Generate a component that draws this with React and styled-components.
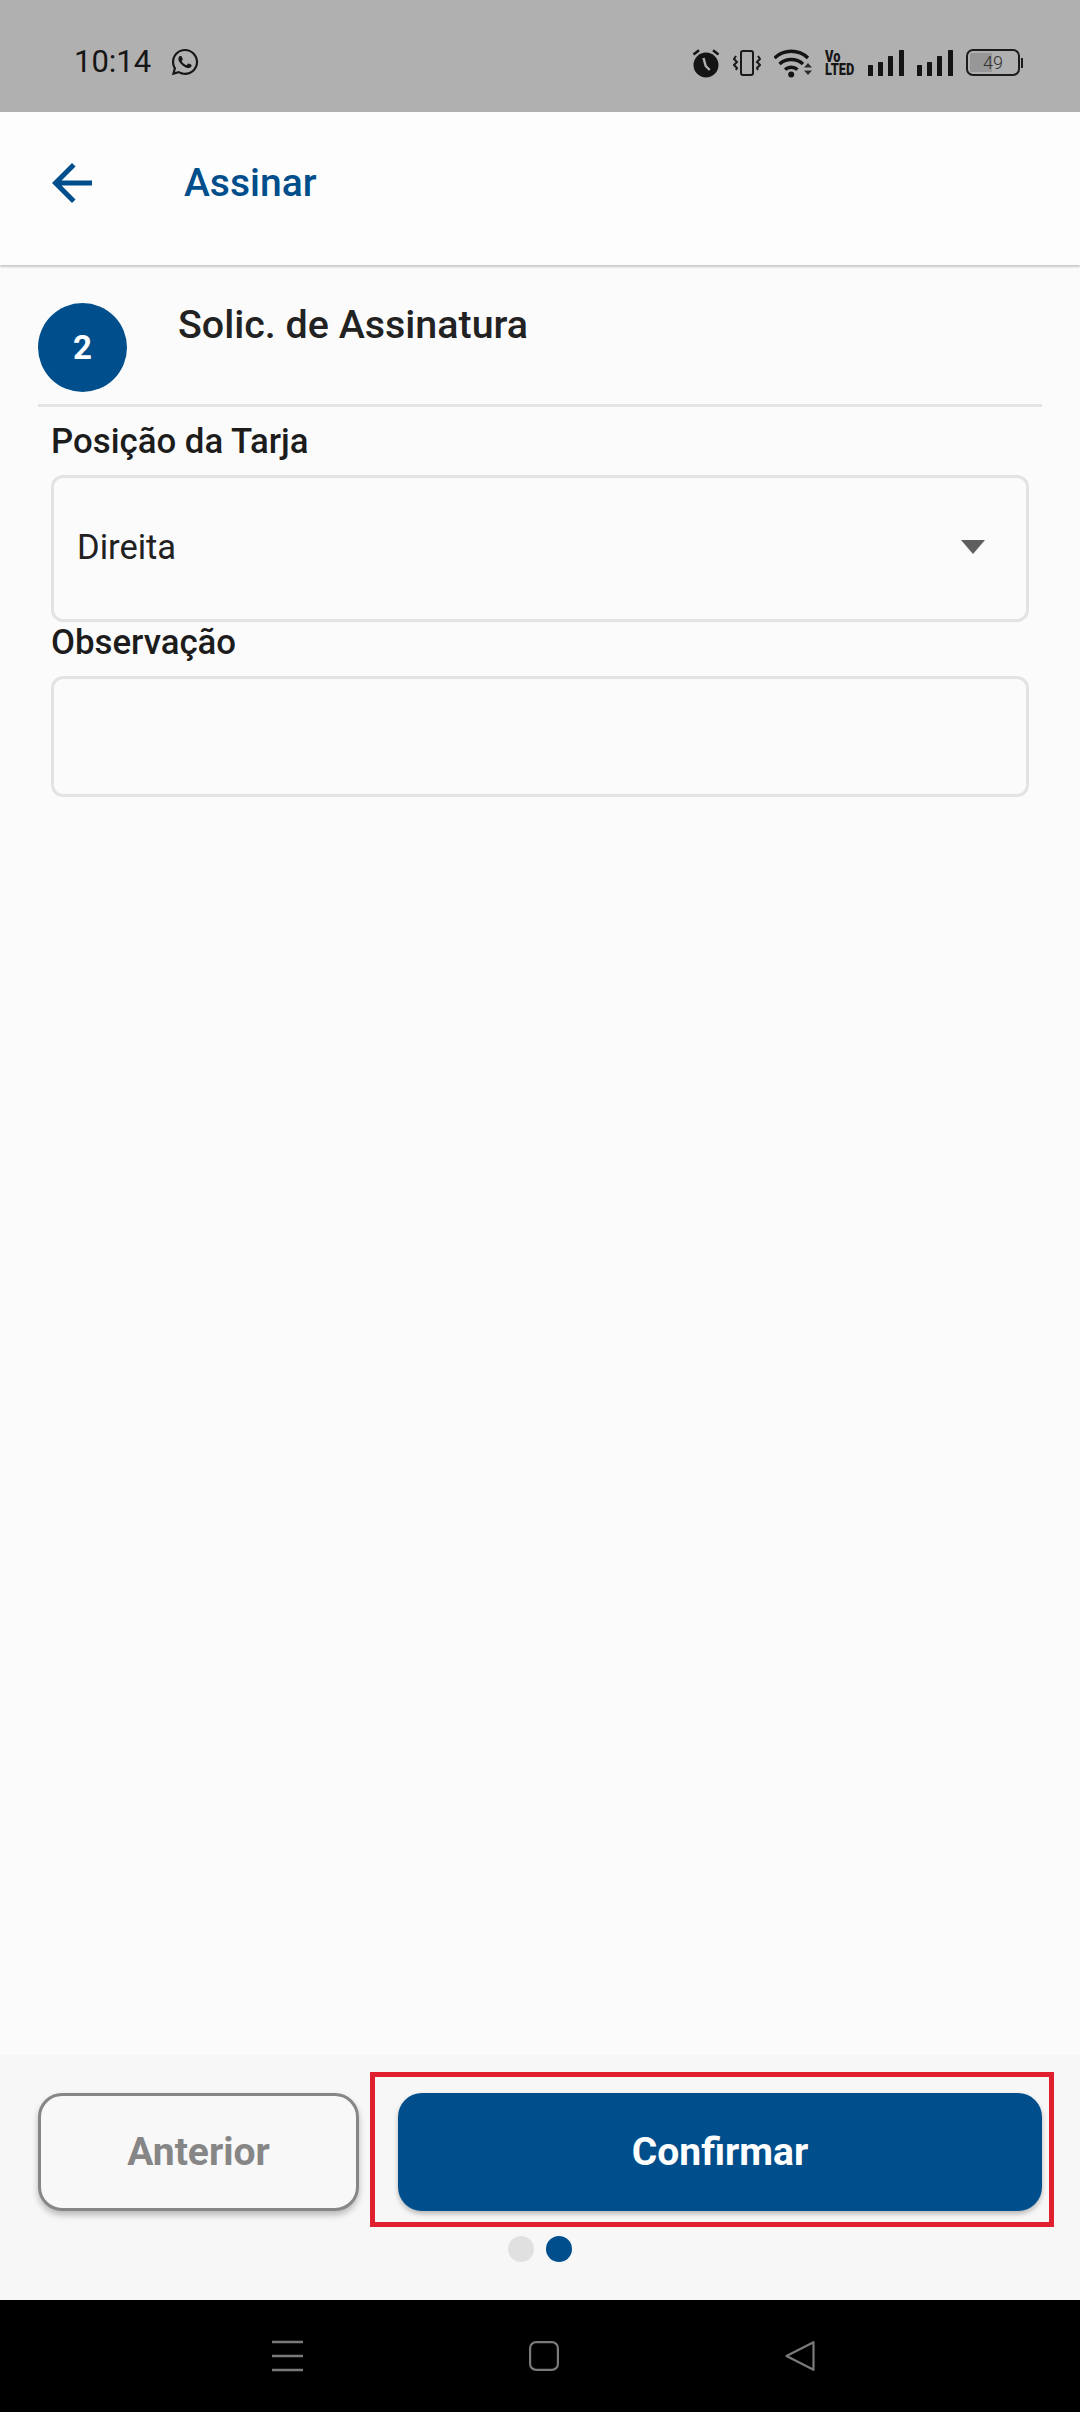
import React from "react";
import styled, { createGlobalStyle } from "styled-components";
import { FaWhatsapp } from "react-icons/fa";
import { MdArrowBack } from "react-icons/md";

const blue = "#004e8b";

const GlobalStyle = createGlobalStyle`
  html, body { margin: 0; padding: 0; background: #fbfbfb; }
  * { box-sizing: border-box; }
  body { font-family: Roboto, "Noto Sans", sans-serif; }
`;

const Screen = styled.div`
  width: 1080px;
  height: 2412px;
  display: flex;
  flex-direction: column;
  overflow: hidden;
  background: #fbfbfb;
`;

// status bar
const StatusBar = styled.div`
  height: 112px;
  flex: none;
  background: #b0b0b0;
  display: flex;
  align-items: center;
  justify-content: space-between;
  padding: 0 57px 0 74px;
  color: #161616;
`;

const StatusLeft = styled.div`
  display: flex;
  align-items: center;
  gap: 19px;
  padding-top: 12px;
`;

const Time = styled.span`
  font-size: 31px;
  line-height: 36px;
`;

const StatusRight = styled.div`
  display: flex;
  align-items: center;
  gap: 13px;
  padding-top: 13px;
`;

const Volte = styled.div`
  width: 30px;
  display: flex;
  flex-direction: column;
  font-size: 16px;
  font-weight: 900;
  line-height: 13px;
  white-space: nowrap;
  color: #161616;
  transform: scaleX(0.8);
  transform-origin: left center;
`;

const Battery = styled.div`
  display: flex;
  align-items: center;
  gap: 1px;
`;

const BatteryBody = styled.div`
  width: 54px;
  height: 27px;
  border: 2px solid #1c1c1c;
  border-radius: 7px;
  display: flex;
  align-items: center;
  justify-content: center;
  font-size: 18px;
  font-weight: 300;
  color: #333;
  background: linear-gradient(#979797, #979797) no-repeat 2px 2px / ${(p) => p.$level}% calc(100% - 4px);
`;

const BatteryNub = styled.div`
  width: 2px;
  height: 10px;
  background: #1c1c1c;
`;

// app bar
const AppBar = styled.header`
  height: 153px;
  flex: none;
  background: #fdfdfd;
  box-shadow: 0 2px 2px rgba(0, 0, 0, 0.2);
  display: flex;
  align-items: center;
  gap: 82px;
  padding: 0 0 12px 42px;
  color: ${blue};
  position: relative;
`;

const AppTitle = styled.h1`
  margin: 0;
  font-size: 39px;
  font-weight: 500;
`;

// content
const Content = styled.main`
  flex: 1;
  display: flex;
  flex-direction: column;
`;

const StepHeader = styled.div`
  margin: 0 38px;
  padding-top: 38px;
  height: 142px;
  display: flex;
  align-items: flex-start;
  gap: 51px;
  border-bottom: 3px solid #e4e4e4;
`;

const StepBadge = styled.div`
  width: 89px;
  height: 89px;
  border-radius: 50%;
  background: ${blue};
  color: #fff;
  font-size: 33px;
  font-weight: 700;
  display: flex;
  align-items: center;
  justify-content: center;
`;

const StepTitle = styled.h2`
  margin: 0;
  font-size: 39.4px;
  line-height: 44px;
  font-weight: 500;
  color: #222;
`;

const Form = styled.div`
  padding: 14px 51px 0;
  display: flex;
  flex-direction: column;
`;

const Label = styled.label`
  display: block;
  font-size: 34.8px;
  line-height: 40px;
  font-weight: 500;
  color: #1c1c1c;
  margin-bottom: 14px;
`;

const Select = styled.div`
  height: 147px;
  border: 3px solid #e3e3e3;
  border-radius: 12px;
  display: flex;
  align-items: center;
  justify-content: space-between;
  padding: 0 41px 3px 23px;
  font-size: 34.5px;
  color: #212121;
`;

const Caret = styled.span`
  width: 0;
  height: 0;
  border-left: 12.5px solid transparent;
  border-right: 12.5px solid transparent;
  border-top: 14px solid #5f5f5f;
`;

const TextInput = styled.input`
  display: block;
  width: 100%;
  height: 121px;
  border: 3px solid #e3e3e3;
  border-radius: 12px;
  background: transparent;
  outline: none;
`;

// footer
const Footer = styled.footer`
  height: 245px;
  flex: none;
  background: #f7f7f7;
  padding: 38px 38px 0;
`;

const ButtonRow = styled.div`
  display: flex;
  gap: 39px;
`;

const OutlineButton = styled.button`
  width: 321px;
  height: 118px;
  border: 3px solid #868686;
  border-radius: 24px;
  background: #f8f8f8;
  color: #868686;
  font-family: inherit;
  font-size: 39px;
  font-weight: 700;
  box-shadow: 0 4px 6px rgba(0, 0, 0, 0.25);
`;

const PrimarySlot = styled.div`
  flex: 1;
  position: relative;
`;

const PrimaryButton = styled.button`
  width: 100%;
  height: 118px;
  border: 0;
  border-radius: 24px;
  background: ${blue};
  color: #fff;
  font-family: inherit;
  font-size: 39px;
  font-weight: 700;
  box-shadow: 0 3px 5px rgba(0, 0, 0, 0.25);
`;

const Highlight = styled.div`
  position: absolute;
  inset: -21px -12px -16px -28px;
  border: 5px solid #e0202e;
  pointer-events: none;
`;

const Dots = styled.div`
  display: flex;
  justify-content: center;
  gap: 12px;
  margin-top: 25px;
`;

const Dot = styled.span`
  width: 26px;
  height: 26px;
  border-radius: 50%;
  background: ${(p) => (p.$active ? blue : "#e0e0e0")};
`;

// android nav
const NavBar = styled.nav`
  height: 112px;
  flex: none;
  background: #000;
  display: flex;
  align-items: center;
  justify-content: center;
  gap: 226px;
  padding: 0 0 0 6px;
`;

const AlarmIcon = () => (
  <svg width="28" height="30" viewBox="0 0 28 30">
    <circle cx="14" cy="17" r="12.5" fill="#141414" />
    <path d="M1.5 6.5 7 2.2M21 2.2l5.5 4.3" stroke="#141414" strokeWidth="2.6" fill="none" />
    <path d="M11.5 10l2.2 8 4 4" stroke="#b0b0b0" strokeWidth="2.4" fill="none" />
  </svg>
);

const VibrateIcon = () => (
  <svg width="28" height="26" viewBox="0 0 28 26" fill="none" stroke="#1a1a1a" strokeWidth="2">
    <rect x="8" y="1" width="12" height="24" rx="2" />
    <path d="M3 6 1 9l3 3-3 3 3 3-1 2M25 6l2 3-3 3 3 3-3 3 1 2" />
  </svg>
);

const WifiIcon = () => (
  <svg width="38" height="30" viewBox="0 0 38 30">
    <g fill="none" stroke="#141414" strokeWidth="3.4">
      <path d="M0.500 10C10 1 24.500 1 34 10" />
      <path d="M5.500 16c6.500-6 17-6 23.500 0" />
      <path d="M11 21.500c3.500-3 9-3 12.500 0" />
    </g>
    <circle cx="17.200" cy="26.500" r="3" fill="#141414" />
    <path d="M30 19.500 34 15l4 4.500zM30 22.500H38L34 27z" fill="#2b2b2b" />
  </svg>
);

const SignalIcon = () => (
  <svg width="36" height="26" viewBox="0 0 36 26" fill="#141414">
    <rect x="0" y="15" width="5" height="11" rx="0.5" />
    <rect x="10" y="12" width="5" height="14" rx="0.5" />
    <rect x="20" y="6" width="5" height="20" rx="0.5" />
    <rect x="31" y="0" width="5" height="26" rx="0.5" />
  </svg>
);

const MenuIcon = () => (
  <svg width="31" height="32" viewBox="0 0 31 32" stroke="#7a7a7a" strokeWidth="2.4">
    <path d="M0 2h31M0 16h31M0 30h31" />
  </svg>
);

const HomeIcon = () => (
  <svg width="30" height="30" viewBox="0 0 30 30" fill="none" stroke="#7a7a7a" strokeWidth="2.2">
    <rect x="1.100" y="1.100" width="27.800" height="27.800" rx="6" />
  </svg>
);

const BackIcon = () => (
  <svg width="30" height="30" viewBox="0 0 30 30" fill="none" stroke="#7a7a7a" strokeWidth="2.2" strokeLinejoin="round">
    <path d="M1.500 15 28.500 1.200v27.600z" />
  </svg>
);

export default function App() {
  return (
    <Screen>
      <GlobalStyle />
      <StatusBar>
        <StatusLeft>
          <Time>10:14</Time>
          <FaWhatsapp size={30} />
        </StatusLeft>
        <StatusRight>
          <AlarmIcon />
          <VibrateIcon />
          <WifiIcon />
          <Volte>
            <span>Vo</span>
            <span>LTED</span>
          </Volte>
          <SignalIcon />
          <SignalIcon />
          <Battery>
            <BatteryBody $level={44}>49</BatteryBody>
            <BatteryNub />
          </Battery>
        </StatusRight>
      </StatusBar>

      <AppBar>
        <MdArrowBack size={60} />
        <AppTitle>Assinar</AppTitle>
      </AppBar>

      <Content>
        <StepHeader>
          <StepBadge>2</StepBadge>
          <StepTitle>Solic. de Assinatura</StepTitle>
        </StepHeader>
        <Form>
          <Label>Posição da Tarja</Label>
          <Select>
            Direita
            <Caret />
          </Select>
          <Label>Observação</Label>
          <TextInput readOnly />
        </Form>
      </Content>

      <Footer>
        <ButtonRow>
          <OutlineButton>Anterior</OutlineButton>
          <PrimarySlot>
            <PrimaryButton>Confirmar</PrimaryButton>
            <Highlight />
          </PrimarySlot>
        </ButtonRow>
        <Dots>
          <Dot />
          <Dot $active />
        </Dots>
      </Footer>

      <NavBar>
        <MenuIcon />
        <HomeIcon />
        <BackIcon />
      </NavBar>
    </Screen>
  );
}
